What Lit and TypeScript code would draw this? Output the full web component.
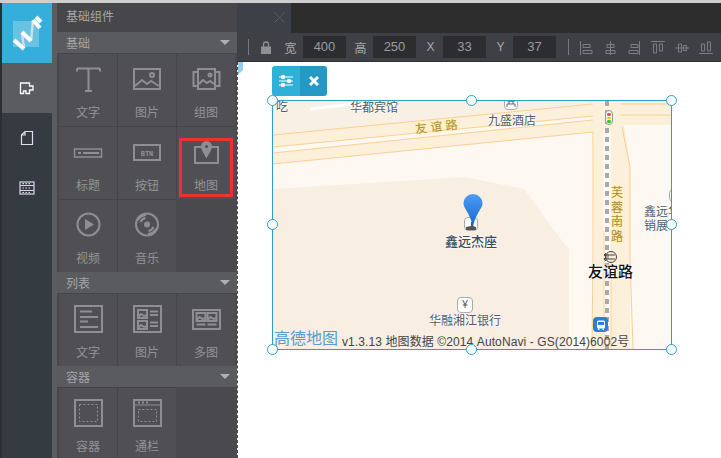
import {customElement} from "lit/decorators.js";
import {css, html, LitElement, svg} from "lit";

const ICONS: Record<string, unknown> = {
    text: svg`<path d="M5 3.500h23M16.500 3.500V26M5 3.500v3M28 3.500v3M13 26h7" />`,
    picture: svg`<rect x="3" y="4" width="26" height="20" /><path d="M4 21l7-6 5 4 4-3 8 5" /><circle cx="21" cy="10" r="2" />`,
    gallery: svg`<rect x="8" y="4" width="17" height="20" /><path d="M8 7H3.500v14H8M25 7h4.500v14H25M9 19l4-4 4 3 3-2 4 3" /><circle cx="20" cy="10" r="1.500" />`,
    title: svg`<rect x="2.500" y="11" width="27" height="8" stroke-width="1.500" /><path d="M6 15h3M11 15h16" />`,
    button: svg`<rect x="3" y="7" width="26" height="15" /><text x="16" y="17.500" class="btn-text">BTN</text>`,
    map: svg`<path d="M11 9H5v16h23V9h-6" /><path class="solid" d="M16.500 3a5.500 5.500 0 0 0-5.500 5.500c0 3.500 3.500 8 5.500 12 2-4 5.500-8.500 5.500-12A5.500 5.500 0 0 0 16.500 3z" /><circle cx="16.500" cy="8.500" r="1.600" class="hole" />`,
    video: svg`<circle cx="16.500" cy="13.500" r="11" /><path class="solid" d="M13 8l9 5.500-9 5.500z" />`,
    music: svg`<circle cx="16" cy="13.500" r="11" /><circle cx="16" cy="13.500" r="3" class="solid" /><path d="M7 9a10 10 0 0 1 8-5M9.500 11a7 7 0 0 1 5-4M25 18a10 10 0 0 1-8 5M22.500 16a7 7 0 0 1-5 4" />`,
    listText: svg`<rect x="3" y="1" width="27" height="26" /><path d="M8 6.500h12M8 12h18M8 16.500h8M8 22h18" />`,
    listPicture: svg`<rect x="3" y="1" width="27" height="26" /><rect x="7" y="5" width="9" height="8" /><rect x="7" y="16" width="9" height="8" /><path d="M19 6.500h8M19 10h8M19 17.500h8M19 21h8M7 12l3-3 3 2 3-1M7 23l3-3 3 2 3-1" />`,
    listGallery: svg`<rect x="3" y="5" width="27" height="19" /><rect x="6.500" y="8" width="9" height="8" /><rect x="17.500" y="8" width="9" height="8" /><path d="M6.500 15l3-3 3 2 3-1M17.500 15l3-3 3 2 3-1M6.500 19.500h9M17.500 19.500h9" />`,
    container: svg`<rect x="3" y="1" width="27" height="26" /><rect x="7.500" y="5.500" width="18" height="17" stroke-dasharray="2 2" stroke-width="1" />`,
    banner: svg`<rect x="3" y="1" width="27" height="26" /><path d="M3 6h27" stroke-width="1" /><path d="M7 3.500h2M11 3.500h2M15 3.500h2" /><rect x="7.500" y="10.500" width="18" height="12" stroke-dasharray="2 2" stroke-width="1" />`,
};

const SECTIONS = [
    {
        title: "基础",
        items: [
            ["文字", "text"], ["图片", "picture"], ["组图", "gallery"],
            ["标题", "title"], ["按钮", "button"], ["地图", "map"],
            ["视频", "video"], ["音乐", "music"],
        ],
    },
    {title: "列表", items: [["文字", "listText"], ["图片", "listPicture"], ["多图", "listGallery"]]},
    {title: "容器", items: [["容器", "container"], ["通栏", "banner"]]},
];

const FIELDS = [["宽", "400"], ["高", "250"], ["X", "33"], ["Y", "37"]];

const ALIGN_ICONS = [
    svg`<path d="M1.500 0v14M4 3.500h7v3H4zM4 9.500h9v3H4z" />`,
    svg`<path d="M7.500 0v14M4 3.500h7v3H4zM3 9.500h9v3H3z" />`,
    svg`<path d="M12.500 0v14M4 3.500h7v3H4zM2 9.500h9v3H2z" />`,
    svg`<path d="M0 .500h14M2.500 3v9h3V3zM8.500 3v7h3V3z" />`,
    svg`<path d="M0 7h14M3.500 3v8h3V3zM8.500 4.500v5h3v-5z" />`,
    svg`<path d="M0 12.500h14M2.500 3v7h3V3zM8.500 1v9h3V1z" />`,
];

// x, y relative to the map box
const LABELS: [string, number, number, string][] = [
    ["吃", 3, 0, "poi"],
    ["华都宾馆", 77, 1, "poi"],
    ["九盛酒店", 215, 14, "poi"],
    ["鑫远杰座", 172, 134, "poi strong"],
    ["华融湘江银行", 156, 214, "poi"],
    ["鑫远华", 371, 105, "poi"],
    ["销展", 371, 119, "poi"],
    ["友谊路", 315, 163, "station"],
];

const HANDLES = [
    [0, 0], [199, 0], [399, 0],
    [0, 124], [399, 124],
    [0, 249], [199, 249], [399, 249],
];

@customElement("app-root")
export class AppRoot extends LitElement {
    private renderSection(section: {title: string; items: string[][]}) {
        return html`
            <div class="section-head">
                <span>${section.title}</span>
                <i class="caret"></i>
            </div>
            <div class="grid">
                ${section.items.map(([label, icon]) => html`
                    <div class="cell">
                        <svg class="icon" viewBox="0 0 32 28" width="32" height="28">${ICONS[icon]}</svg>
                        <span>${label}</span>
                        ${icon === "map" ? html`<div class="marker"></div>` : ""}
                    </div>
                `)}
            </div>
        `;
    }

    private renderRail() {
        return html`
            <div class="rail">
                <div class="logo">
                    <svg viewBox="0 0 50 60" width="50" height="60" fill="none">
                        <rect x="11" y="18" width="26" height="26" fill="#fff" opacity=".25" />
                        <path d="M22 45l-2-15M29 38l2-21" stroke="#d5dde0" stroke-width="2.500" />
                        <path d="M12 37l10 9M20 29l9 9M31 17l7 8M34 14l5 5" stroke="#fff" stroke-width="4" />
                    </svg>
                </div>
                <div class="rail-item active">
                    <svg viewBox="0 0 16 16" width="16" height="16" fill="none" stroke="#fff" stroke-width="1.300">
                        <path d="M1.500 3h9v3h3.500v4h-3.500v3.500H7V11H4.500v2.500h-3z" />
                    </svg>
                </div>
                <div class="rail-item">
                    <svg viewBox="0 0 14 16" width="14" height="16" fill="none" stroke="#e3dcf0" stroke-width="1.200">
                        <path d="M1.500 5L5 1.500h7.500v13h-11zM5 1.500V5H1.500" />
                    </svg>
                </div>
                <div class="rail-item">
                    <svg viewBox="0 0 16 14" width="16" height="14" fill="none" stroke="#d9d2ea" stroke-width="1.200">
                        <rect x="1" y="1" width="14" height="12" />
                        <path d="M1 4.500h14M1 9.500h14" />
                        <path d="M3.500 7h9M3.500 11.500h9M3.500 2.700h9" stroke-dasharray="1.500 1.500" />
                    </svg>
                </div>
            </div>
        `;
    }

    private renderToolbar() {
        return html`
            <div class="toolbar">
                <i class="sep"></i>
                <svg class="lock" viewBox="0 0 10 13" width="10" height="13">
                    <path d="M2.500 6V3.500a2.500 2.500 0 0 1 5 0V6" fill="none" stroke="#8e9094" stroke-width="1.300" />
                    <rect y="5.500" width="10" height="7.500" fill="#8e9094" />
                </svg>
                <div class="fields">
                    ${FIELDS.map(([label, value]) => html`
                        <div class="field">
                            <label>${label}</label>
                            <div class="input">${value}</div>
                        </div>
                    `)}
                </div>
                <i class="sep sep-align"></i>
                <div class="aligns">
                    ${ALIGN_ICONS.map((icon) => html`
                        <svg viewBox="0 0 14 14" width="14" height="14" fill="none" stroke="#7d7f84">${icon}</svg>
                    `)}
                </div>
            </div>
        `;
    }

    private renderMap() {
        return html`
            <div class="map">
                <svg class="map-art" viewBox="0 0 398 248" width="398" height="248">
                    <rect width="398" height="248" fill="#fdf8f2" />
                    <path d="M0 0h320v3L0 34z" fill="#f9f0e5" />
                    <path d="M37 8l43-5M80 3l50-5" stroke="#fff" stroke-width="3" fill="none" />
                    <path d="M0 88l192-12 59 12 30 41 15 20v99H0z" fill="#f8eee2" />
                    <path d="M0 34L320 3v12L0 46zM0 52L320 19v12L0 63zM348 0h50v24h-50z" fill="#fdf0db" />
                    <path d="M319 0h29l9 65v183h-37l1-90z" fill="#fdf0db" />
                    <path d="M330 30h8v218h-8z" fill="#fdf8f2" />
                    <g fill="none" stroke="#fbcf92" stroke-width="1">
                        <path d="M0 34L320 3M0 46L320 15M0 52L320 19M0 63L320 31M348 3h50M348 14h50" />
                        <path d="M320 31v120l-1 97M349 26l8 40v90l3 92M331 130v118M338 150v98" />
                    </g>
                    <path d="M334 0v248" stroke="#a9a9a9" stroke-width="4" stroke-dasharray="5 4" fill="none" />
                </svg>

                <div class="road-name diagonal">友 谊 路</div>
                <div class="road-name vertical">芙蓉南路</div>

                <div class="poi-icon hotel-icon">
                    <svg viewBox="0 0 10 9" width="10" height="9" fill="none" stroke="#666"><path d="M1 8V5h8v3M3 5V2h4v3M1 2h8" /></svg>
                </div>
                <div class="poi-icon pin-base">
                    <svg viewBox="0 0 10 9" width="10" height="9" fill="#555"><path d="M0 9V6l5-1V1h2v4l3 1v3z" /></svg>
                </div>
                <div class="poi-icon yen">¥</div>
                <div class="poi-icon side-icon"></div>

                <div class="traffic"><i></i><i></i><i></i></div>

                <svg class="pin" viewBox="0 0 20 33" width="20" height="33">
                    <defs>
                        <linearGradient id="pin-fill" x1="0" y1="0" x2="0" y2="1">
                            <stop offset="0" stop-color="#4c9cf7" />
                            <stop offset="1" stop-color="#1667c9" />
                        </linearGradient>
                    </defs>
                    <path d="M10 0a9.500 9.500 0 0 0-9.500 9.500c0 5 6.500 9 9.500 23.500 3-14.500 9.500-18.500 9.500-23.500A9.500 9.500 0 0 0 10 0z" fill="url(#pin-fill)" />
                </svg>

                <svg class="metro" viewBox="0 0 14 14" width="14" height="14" fill="none" stroke="#444" stroke-width="1">
                    <circle cx="8" cy="7" r="5.500" />
                    <path d="M1 5h11M1 9h11M3 3L1 5l2 2M3 7L1 9l2 2" />
                </svg>

                <div class="bus">
                    <svg viewBox="0 0 10 10" width="10" height="10">
                        <rect x="1" y="0.500" width="8" height="8" rx="1.500" fill="#fff" />
                        <rect x="2" y="2" width="6" height="3" fill="#2b7fdb" />
                        <path d="M2 8.500h1.500V10H2zM6.500 8.500H8V10H6.500z" fill="#fff" />
                    </svg>
                </div>

                ${LABELS.map(([text, x, y, cls]) => html`
                    <div class=${cls} style="left:${x}px;top:${y}px">${text}</div>
                `)}

                <div class="brand">高德地图</div>
                <div class="copyright">v1.3.13 地图数据 ©2014 AutoNavi - GS(2014)6002号</div>
            </div>
            ${HANDLES.map(([x, y]) => html`
                <i class="handle" style="left:${x + 34}px;top:${y + 38}px"></i>
            `)}
        `;
    }

    protected override render() {
        return html`
            <div class="top-line"></div>
            <div class="body">
                ${this.renderRail()}
                <div class="panel">
                    <div class="panel-head">基础组件</div>
                    ${SECTIONS.map((s) => this.renderSection(s))}
                </div>
                <div class="main">
                    <div class="tabs">
                        <div class="tab">
                            <svg viewBox="0 0 11 11" width="11" height="11" stroke="#5a5c62" fill="none"><path d="M0.500 0.500l10 10M10.500 0.500l-10 10" /></svg>
                        </div>
                    </div>
                    ${this.renderToolbar()}
                    <div class="canvas">
                        <i class="ruler-tab"></i>
                        <div class="float-bar">
                            <button class="settings">
                                <svg viewBox="0 0 14 12" width="14" height="12" stroke="#fff" stroke-width="1.200" fill="#fff">
                                    <path d="M0 2h14M0 6h14M0 10h14" />
                                    <circle cx="4" cy="2" r="1.600" /><circle cx="10" cy="6" r="1.600" /><circle cx="4" cy="10" r="1.600" />
                                </svg>
                            </button>
                            <button class="close">
                                <svg viewBox="0 0 10 10" width="10" height="10" stroke="#fff" stroke-width="3" fill="none"><path d="M1 1l8 8M9 1l-8 8" /></svg>
                            </button>
                        </div>
                        ${this.renderMap()}
                    </div>
                </div>
            </div>
        `;
    }

    static override styles = css`
        :host {
            display: block;
            width: 721px;
            height: 458px;
            overflow: hidden;
            background: #fff;
            font-family: "Liberation Sans", "Noto Sans CJK SC", sans-serif;
        }
        .top-line {
            height: 3px;
            background: #cfcfcf;
        }
        .body {
            display: flex;
            height: 455px;
            background: #2b2e33;
        }
        .rail {
            width: 50px;
            margin-left: 2px;
            flex: none;
            background: #343c42;
        }
        .logo {
            height: 60px;
            background: #35aedb;
        }
        .logo svg {
            display: block;
        }
        .rail-item {
            height: 50px;
            display: flex;
            align-items: center;
            justify-content: center;
        }
        .rail-item.active {
            background: #5a5c60;
        }
        .panel {
            width: 180px;
            margin-left: 5px;
            flex: none;
            overflow: hidden;
            background: #4a4a4e;
            position: relative;
            box-shadow: -5px 0 0 #5a5c60;
        }
        .panel-head {
            height: 29px;
            padding-left: 9px;
            font-size: 12px;
            line-height: 28px;
            color: #a5a5a8;
            background: #47474b;
        }
        .section-head {
            height: 21px;
            padding: 0 7px 0 9px;
            display: flex;
            align-items: center;
            justify-content: space-between;
            font-size: 12px;
            color: #a5a5a8;
            background: #5a5b5f;
        }
        .caret {
            border: 5px solid transparent;
            border-top: 5px solid #b0b0b3;
            border-bottom: 0;
        }
        .grid {
            display: grid;
            grid-template-columns: repeat(3, 59px);
            grid-auto-rows: 73px;
            padding-left: 1px;
            background: #4a4a4e;
        }
        .cell {
            position: relative;
            display: flex;
            flex-direction: column;
            align-items: center;
            box-sizing: border-box;
            padding-top: 11px;
            font-size: 12px;
            line-height: 14px;
            color: #939396;
            background: #505054;
            border-left: 1px solid #454549;
            border-top: 1px solid #454549;
        }
        .cell span {
            margin-top: 13px;
        }
        .icon {
            fill: none;
            stroke: #8f8f93;
            stroke-width: 2;
        }
        .icon .solid {
            fill: #8f8f93;
            stroke: none;
        }
        .icon .hole {
            fill: #505054;
            stroke: none;
        }
        .icon .btn-text {
            font: bold 7px "Liberation Mono", monospace;
            text-anchor: middle;
            fill: #8f8f93;
            stroke: none;
        }
        .marker {
            position: absolute;
            left: 2px;
            top: 11px;
            width: 54px;
            height: 59px;
            box-sizing: border-box;
            border: 3px solid #f03030;
        }
        .main {
            flex: 1;
            display: flex;
            flex-direction: column;
            min-width: 0;
        }
        .tabs {
            height: 30px;
            flex: none;
            background: #2d2d2d;
        }
        .tab {
            width: 54px;
            height: 30px;
            box-sizing: border-box;
            padding: 9px 0 0 37px;
            background: #3e4047;
        }
        .tab svg {
            display: block;
        }
        .toolbar {
            height: 29px;
            flex: none;
            box-sizing: border-box;
            display: flex;
            align-items: center;
            padding-left: 11px;
            background: #3f4046;
            border-bottom: 1px solid #2f3034;
        }
        .sep {
            width: 1px;
            height: 16px;
            background: #77797e;
        }
        .lock {
            margin-left: 12px;
        }
        .fields {
            display: flex;
            gap: 8px;
            margin-left: 13px;
        }
        .field {
            display: flex;
            align-items: center;
        }
        .field label {
            width: 13px;
            margin-right: 6px;
            text-align: center;
            font-size: 12px;
            color: #a8a9ad;
        }
        .input {
            width: 43px;
            height: 22px;
            line-height: 22px;
            text-align: center;
            font-size: 13px;
            color: #9a9b9f;
            background: #2d2d2f;
        }
        .sep-align {
            margin-left: 12px;
        }
        .aligns {
            display: flex;
            gap: 10px;
            margin-left: 10px;
            padding-top: 2px;
        }
        .canvas {
            flex: 1;
            position: relative;
            background: #fff;
            border-left: 1px dashed #4a4a4e;
        }
        .ruler-tab {
            position: absolute;
            left: 0;
            top: 0;
            width: 5px;
            height: 13px;
            background: #8fd0f0;
            clip-path: polygon(0 0, 100% 0, 100% 60%, 0 100%);
        }
        .float-bar {
            position: absolute;
            left: 34px;
            top: 4px;
            display: flex;
            border-radius: 3px;
            overflow: hidden;
        }
        .float-bar button {
            width: 28px;
            height: 30px;
            padding: 0;
            border: 0;
            display: flex;
            align-items: center;
            justify-content: center;
        }
        .settings {
            background: #2fb0d8;
        }
        .float-bar .close {
            width: 27px;
            background: #2499c6;
        }
        .map {
            position: absolute;
            left: 34px;
            top: 38px;
            width: 400px;
            height: 250px;
            box-sizing: border-box;
            border: 1px solid #2a9fd0;
            overflow: hidden;
        }
        .map-art {
            display: block;
        }
        .map > div, .map > svg:not(.map-art) {
            position: absolute;
        }
        .poi {
            font-size: 12px;
            line-height: 13px;
            white-space: nowrap;
            color: #4d5b68;
            text-shadow: 0 0 2px #fff, 0 0 2px #fff, 0 0 2px #fff;
        }
        .poi.strong {
            font-size: 13px;
            line-height: 14px;
            font-weight: 500;
            color: #3e4c58;
        }
        .station {
            font-size: 15px;
            line-height: 16px;
            font-weight: 500;
            color: #111;
            white-space: nowrap;
            text-shadow: 0 0 2px #fff, 0 0 2px #fff, 0 0 2px #fff;
        }
        .road-name {
            font-size: 12px;
            line-height: 13px;
            color: #a98a3e;
            text-shadow: 0 0 3px #ffee99, 0 0 3px #ffee99, 0 0 3px #ffee99;
        }
        .diagonal {
            left: 142px;
            top: 20px;
            white-space: nowrap;
            transform: rotate(-6deg);
        }
        .vertical {
            left: 338px;
            top: 85px;
            width: 12px;
            line-height: 14.500px;
        }
        .poi-icon {
            width: 14px;
            height: 14px;
            box-sizing: border-box;
            display: flex;
            align-items: center;
            justify-content: center;
            background: #fff;
            border: 1px solid #aaa;
            border-radius: 4px;
            font-size: 10px;
            line-height: 12px;
            color: #555;
        }
        .hotel-icon {
            left: 231px;
            top: -4px;
            height: 13px;
        }
        .pin-base {
            left: 191px;
            top: 116px;
            padding-top: 2px;
        }
        .yen {
            left: 184px;
            top: 196px;
            width: 16px;
            height: 16px;
        }
        .side-icon {
            left: 396px;
            top: 88px;
            height: 13px;
        }
        .traffic {
            left: 332px;
            top: 9px;
            width: 8px;
            height: 15px;
            box-sizing: border-box;
            padding-top: 2px;
            display: flex;
            flex-direction: column;
            align-items: center;
            gap: 1px;
            background: #f4f1ec;
            border: 1px solid #999;
            border-radius: 4px;
        }
        .traffic i {
            width: 4px;
            height: 2.500px;
            border-radius: 50%;
            background: #f44;
        }
        .traffic i:nth-child(2) {
            background: #fb0;
        }
        .traffic i:nth-child(3) {
            background: #2c2;
        }
        .pin {
            left: 190px;
            top: 93px;
        }
        .metro {
            left: 330px;
            top: 149px;
        }
        .bus {
            left: 320px;
            top: 216px;
            width: 15px;
            height: 15px;
            display: flex;
            align-items: center;
            justify-content: center;
            border-radius: 4px;
            background: #2b7fdb;
        }
        .brand {
            left: 1px;
            top: 229px;
            font-size: 16px;
            line-height: 18px;
            color: #5a9ad0;
        }
        .copyright {
            left: 69px;
            top: 234px;
            font-size: 12px;
            line-height: 15px;
            letter-spacing: .1px;
            white-space: nowrap;
            color: #444;
        }
        .handle {
            position: absolute;
            width: 9px;
            height: 9px;
            margin: -5px 0 0 -5px;
            box-sizing: content-box;
            border: 1px solid #2a9fd0;
            border-radius: 50%;
            background: #fff;
        }
    `;
}

declare global {
    interface HTMLElementTagNameMap {
        "app-root": AppRoot;
    }
}
